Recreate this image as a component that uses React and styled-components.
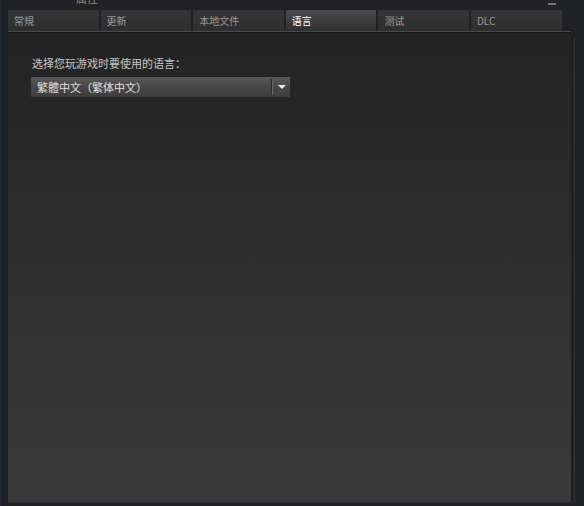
import React from "react";
import styled, { createGlobalStyle } from "styled-components";

const Global = createGlobalStyle`
  html, body { margin: 0; padding: 0; background: #1e2023; }
  body { font-family: "Noto Sans CJK SC", "Liberation Sans", sans-serif; }
`;

const Window = styled.div`
  width: 584px;
  height: 506px;
  background: #1f2124;
  display: flex;
  flex-direction: column;
  position: relative;
  overflow: hidden;
`;

const TitleStub = styled.div`
  position: absolute;
  top: -10px;
  left: 76px;
  font-size: 11px;
  color: #8a8a8a;
`;

const CloseStub = styled.div`
  position: absolute;
  top: -4px;
  right: 28px;
  width: 8px;
  height: 7px;
  border-bottom: 2px solid #777;
`;

const Body = styled.div`
  flex: 1;
  display: flex;
  padding: 10px 9px 3px 7px;
  border-left: 1px solid #202a30;
`;

const Main = styled.div`
  flex: 1;
  display: flex;
  flex-direction: column;
`;

const SideRail = styled.div`
  width: 2px;
  margin-left: 1px;
  margin-top: 28px;
  background: #2d2d2d;
  border-left: 1px solid #161718;
`;

const Tabs = styled.div`
  display: flex;
  gap: 2px;
  height: 21px;
`;

const Tab = styled.div`
  width: 90.6px;
  height: 21px;
  box-sizing: border-box;
  padding: 4px 0 0 6px;
  font-size: 10px;
  line-height: 14px;
  color: ${(p) => (p.$active ? "#ffffff" : "#9a9a9a")};
  background: ${(p) =>
    p.$active
      ? "linear-gradient(#4b4b4b, #3c3c3c 55%, #2e2e2e)"
      : "linear-gradient(#353535, #2f2f2f)"};
`;

const TabLine = styled.div`
  height: 1px;
  background: #4a4a4a;
  border-bottom: 1px solid #1a1a1a;
`;

const Panel = styled.div`
  flex: 1;
  background: linear-gradient(#232323, #2e2e2e 45%, #3a3a3a);
  padding: 23px 24px;
  border-bottom: 1px solid #2a2a2a;
`;

const Label = styled.div`
  font-size: 11px;
  color: #c8c8c8;
  line-height: 14px;
  margin-bottom: 7px;
`;

const Select = styled.div`
  width: 259px;
  height: 20px;
  display: flex;
  align-items: center;
  background: linear-gradient(#575757, #474747 50%, #3d3d3d);
  margin-left: -1px;
`;

const SelectText = styled.div`
  flex: 1;
  padding-left: 6px;
  font-size: 11px;
  color: #e0e0e0;
`;

const Divider = styled.div`
  width: 1px;
  height: 16px;
  background: #2b2b2b;
  border-right: 1px solid #666;
`;

const Arrow = styled.div`
  width: 17px;
  display: flex;
  justify-content: center;
  &::after {
    content: "";
    border-left: 4px solid transparent;
    border-right: 4px solid transparent;
    border-top: 4px solid #e8e8e8;
  }
`;

const tabs = ["常規", "更新", "本地文件", "语言", "测试", "DLC"];

export default function App() {
  return (
    <>
      <Global />
      <Window>
        <TitleStub>属性</TitleStub>
        <CloseStub />
        <Body>
          <Main>
            <Tabs>
              {tabs.map((t, i) => (
                <Tab key={t} $active={i === 3}>
                  {t}
                </Tab>
              ))}
            </Tabs>
            <TabLine />
            <Panel>
              <Label>选择您玩游戏时要使用的语言：</Label>
              <Select>
                <SelectText>繁體中文（繁体中文）</SelectText>
                <Divider />
                <Arrow />
              </Select>
            </Panel>
          </Main>
          <SideRail />
        </Body>
      </Window>
    </>
  );
}
